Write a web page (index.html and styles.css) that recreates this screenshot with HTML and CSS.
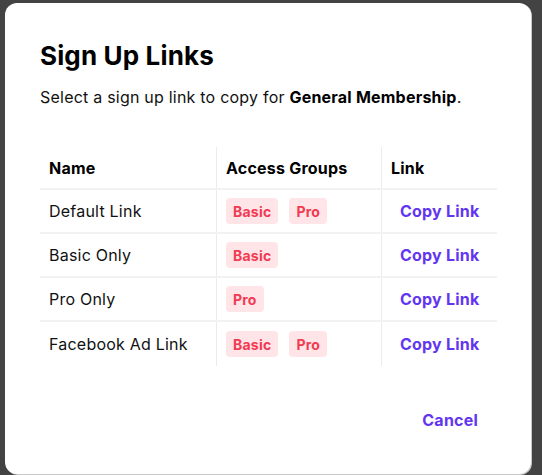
FILE: index.html
```html
<!DOCTYPE html>
<html lang="en">
<head>
<meta charset="utf-8">
<title>Sign Up Links</title>
<link rel="stylesheet" href="styles.css">
</head>
<body>
<div class="backdrop">
  <div class="modal">
    <h1 class="title">Sign Up Links</h1>
    <p class="subtitle">Select a sign up link to copy for <strong>General Membership</strong>.</p>
    <div class="table">
      <div class="row head">
        <div class="cell">Name</div>
        <div class="cell">Access Groups</div>
        <div class="cell">Link</div>
      </div>
      <div class="row">
        <div class="cell">Default Link</div>
        <div class="cell groups"><span class="badge">Basic</span><span class="badge">Pro</span></div>
        <div class="cell"><button class="link-btn">Copy Link</button></div>
      </div>
      <div class="row">
        <div class="cell">Basic Only</div>
        <div class="cell groups"><span class="badge">Basic</span></div>
        <div class="cell"><button class="link-btn">Copy Link</button></div>
      </div>
      <div class="row">
        <div class="cell">Pro Only</div>
        <div class="cell groups"><span class="badge">Pro</span></div>
        <div class="cell"><button class="link-btn">Copy Link</button></div>
      </div>
      <div class="row last">
        <div class="cell">Facebook Ad Link</div>
        <div class="cell groups"><span class="badge">Basic</span><span class="badge">Pro</span></div>
        <div class="cell"><button class="link-btn">Copy Link</button></div>
      </div>
    </div>
    <div class="footer">
      <button class="link-btn cancel">Cancel</button>
    </div>
  </div>
</div>
</body>
</html>
```
FILE: styles.css
```css
* { box-sizing: border-box; }
html, body {
  margin: 0;
  padding: 0;
  background: #434343;
  font-family: Inter, "Noto Sans", sans-serif;
  color: #111;
}
.backdrop {
  width: 542px;
  height: 475px;
  padding: 3px 11px 0 5px;
}
.modal {
  width: 526px;
  height: 471px;
  background: #fff;
  border-radius: 12px;
  box-shadow: 1px 1px 0 #c8c8c8;
  padding: 37px 34px 0 35px;
  display: flex;
  flex-direction: column;
}
.title {
  margin: 0;
  font-size: 26px;
  line-height: 32px;
  font-weight: 700;
  color: #000;
  letter-spacing: 0.15px;
}
.subtitle {
  margin: 13px 0 0;
  font-size: 16px;
  line-height: 24px;
  color: #111;
  letter-spacing: 0.22px;
}
.subtitle strong { font-weight: 700; color: #000; }
.table {
  margin-top: 38px;
  display: flex;
  flex-direction: column;
  letter-spacing: 0.22px;
}
.row {
  display: grid;
  grid-template-columns: 177px 165px 115px;
  height: 44px;
  border-bottom: 2px solid #f2f2f2;
}
.row.head { height: 43px; }
.row.last { border-bottom: none; height: 44px; }
.cell {
  display: flex;
  align-items: center;
  padding-left: 9px;
  font-size: 16px;
  color: #111;
}
.cell:nth-child(1), .cell:nth-child(2) { border-right: 1px solid #ececec; }
.head .cell { font-weight: 700; color: #000; }
.groups { gap: 11px; }
.badge {
  display: inline-flex;
  align-items: center;
  height: 26px;
  padding: 0 7px;
  border-radius: 4px;
  background: #ffe5e8;
  color: #f23a52;
  font-weight: 700;
  font-size: 14px;
}
.link-btn {
  border: none;
  background: none;
  font-family: inherit;
  font-size: 16px;
  font-weight: 700;
  color: #6236f0;
  padding: 6px 9px;
  letter-spacing: 0.22px;
  cursor: pointer;
}
.footer {
  display: flex;
  justify-content: flex-end;
  margin-top: 36px;
}
.cancel { padding: 8px 19px; }
```
